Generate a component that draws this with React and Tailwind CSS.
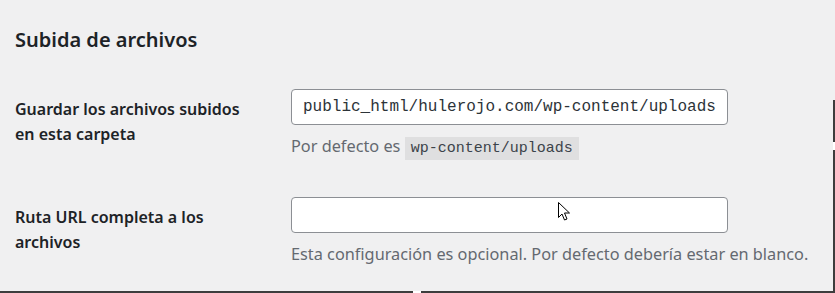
import React from 'react';

const Cursor = () => (
  <svg width="14" height="21" viewBox="0 0 14 21" className="absolute left-[557px] top-[201px]">
    <path d="M1.5 1.5 L1.5 16.5 L5 13 L7.5 19 L10 18 L7.5 12 L12.5 12 Z" fill="#fff" stroke="#000" strokeWidth="1" />
  </svg>
);

const Row = ({ label, value, children }) => (
  <div className="flex">
    <div className="w-[276px] shrink-0 pt-[8px] text-[16px] leading-[25px] font-semibold text-[#1d2327]">{label}</div>
    <div>
      <div className="w-[437px] h-[36px] border border-[#8c8f94] rounded-[4px] bg-white px-[11px] flex items-center font-['Liberation_Mono',monospace] text-[16px] text-[#2c3338]">
        {value}
      </div>
      <p className="mt-[8px] h-[26px] text-[16.3px] leading-[26px] text-[#646970] whitespace-nowrap">{children}</p>
    </div>
  </div>
);

export default function App() {
  return (
    <div className="relative w-[835px] h-[293px] bg-[#f0f0f1] overflow-hidden font-['Noto_Sans',sans-serif]">
      <div className="pl-[15px] pt-[27px]">
        <h2 className="text-[20px] leading-[26px] font-semibold text-[#1d2327]">Subida de archivos</h2>
        <div className="mt-[36px] flex flex-col gap-[38px]">
          <Row label={<>Guardar los archivos subidos<br />en esta carpeta</>} value="public_html/hulerojo.com/wp-content/uploads">
            Por defecto es{' '}
            <code className="bg-[#dfdfe0] px-[6px] py-[3px] font-['Liberation_Mono',monospace] text-[15px] text-[#3c434a]">wp-content/uploads</code>
          </Row>
          <Row label={<>Ruta URL completa a los<br />archivos</>} value="">
            Esta configuración es opcional. Por defecto debería estar en blanco.
          </Row>
        </div>
      </div>

      {/* screenshot edges */}
      <div className="absolute left-0 right-0 bottom-0 h-[2px] bg-[#3d3d3d]" />
      <div className="absolute left-[413px] w-[8px] bottom-0 h-[2px] bg-white" />
      <div className="absolute right-0 top-[100px] bottom-0 w-[2px] bg-[#3d3d3d]" />
      <div className="absolute right-0 top-[142px] h-[8px] w-[2px] bg-white" />

      <Cursor />
    </div>
  );
}
